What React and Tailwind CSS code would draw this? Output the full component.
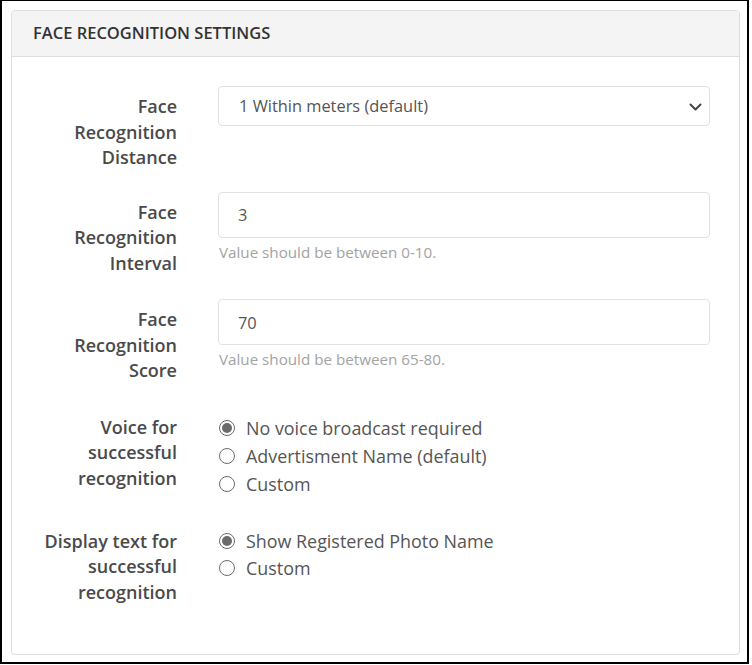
import { useState } from "react";

function Radio({ checked, label, onClick }) {
    return (
        <label className="flex items-center cursor-pointer" onClick={onClick}>
            <span className="w-[16px] h-[16px] ml-[1px] rounded-full border border-[#6b6b6b] flex items-center justify-center bg-white">
                {checked && <span className="w-[10px] h-[10px] rounded-full bg-[#6b6b6b]"></span>}
            </span>
            <span className="ml-[11px]">{label}</span>
        </label>
    );
}

function Row({ label, className, labelPad, children }) {
    return (
        <div className={"flex " + (className || "")}>
            <div className={"w-[165px] text-right font-semibold text-[18px] leading-[25.5px] text-[#4a4a4a] shrink-0 " + (labelPad ? "pt-[8px]" : "")}>{label}</div>
            <div className="ml-[41px] w-[492px]">{children}</div>
        </div>
    );
}

export default function App() {
    let [voice, setVoice] = useState(0);
    let [display, setDisplay] = useState(0);

    return (
        <div className="w-[749px] h-[664px] border-t border-b-2 border-l-2 border-r-2 border-black bg-white pl-[9px] pt-[9px]" style={{ fontFamily: '"Open Sans", "Liberation Sans", sans-serif' }}>
            <div className="w-[729px] h-[645px] border border-[#dddddd] rounded-[4px] bg-white overflow-hidden">
                <div className="h-[46px] bg-[#f4f4f4] border-b border-[#dddddd] flex items-center px-[21px]">
                    <h3 className="text-[16.5px] font-semibold text-[#333]">FACE RECOGNITION SETTINGS</h3>
                </div>

                <div className="pt-[29px]">
                    <Row labelPad label={<>Face<br />Recognition<br />Distance</>}>
                        <div className="relative h-[40px] border border-[#e2e2e2] rounded-[4px] flex items-center pl-[20px] text-[16.4px] text-[#555]">
                            1 Within meters (default)
                            <svg className="absolute right-[7px] top-[16px]" width="13" height="8" viewBox="0 0 13 8" fill="none" stroke="#444" strokeWidth="2" strokeLinecap="round" strokeLinejoin="round">
                                <path d="M1.5 1.5l5 5 5-5" />
                            </svg>
                        </div>
                    </Row>

                    <Row labelPad className="mt-[21px]" label={<>Face<br />Recognition<br />Interval</>}>
                        <input defaultValue="3" className="w-full h-[46px] border border-[#e2e2e2] rounded-[4px] px-[19px] text-[16.4px] text-[#555] outline-none" />
                        <p className="text-[15.2px] leading-[20px] text-[#a3a3a3] mt-[4px] pl-[1px]">Value should be between 0-10.</p>
                    </Row>

                    <Row labelPad className="mt-[23px]" label={<>Face<br />Recognition<br />Score</>}>
                        <input defaultValue="70" className="w-full h-[46px] border border-[#e2e2e2] rounded-[4px] px-[19px] text-[16.4px] text-[#555] outline-none" />
                        <p className="text-[15.2px] leading-[20px] text-[#a3a3a3] mt-[4px] pl-[1px]">Value should be between 65-80.</p>
                    </Row>

                    <Row className="mt-[31px]" label={<>Voice for<br />successful<br />recognition</>}>
                        <div className="flex flex-col text-[17.9px] leading-[28px] text-[#555] -mt-[1px]">
                            <Radio checked={voice == 0} label="No voice broadcast required" onClick={() => setVoice(0)} />
                            <Radio checked={voice == 1} label="Advertisment Name (default)" onClick={() => setVoice(1)} />
                            <Radio checked={voice == 2} label="Custom" onClick={() => setVoice(2)} />
                        </div>
                    </Row>

                    <Row className="mt-[31px]" label={<>Display text for<br />successful<br />recognition</>}>
                        <div className="flex flex-col text-[17.9px] leading-[27px] text-[#555] -mt-[1px]">
                            <Radio checked={display == 0} label="Show Registered Photo Name" onClick={() => setDisplay(0)} />
                            <Radio checked={display == 1} label="Custom" onClick={() => setDisplay(1)} />
                        </div>
                    </Row>
                </div>
            </div>
        </div>
    );
}
